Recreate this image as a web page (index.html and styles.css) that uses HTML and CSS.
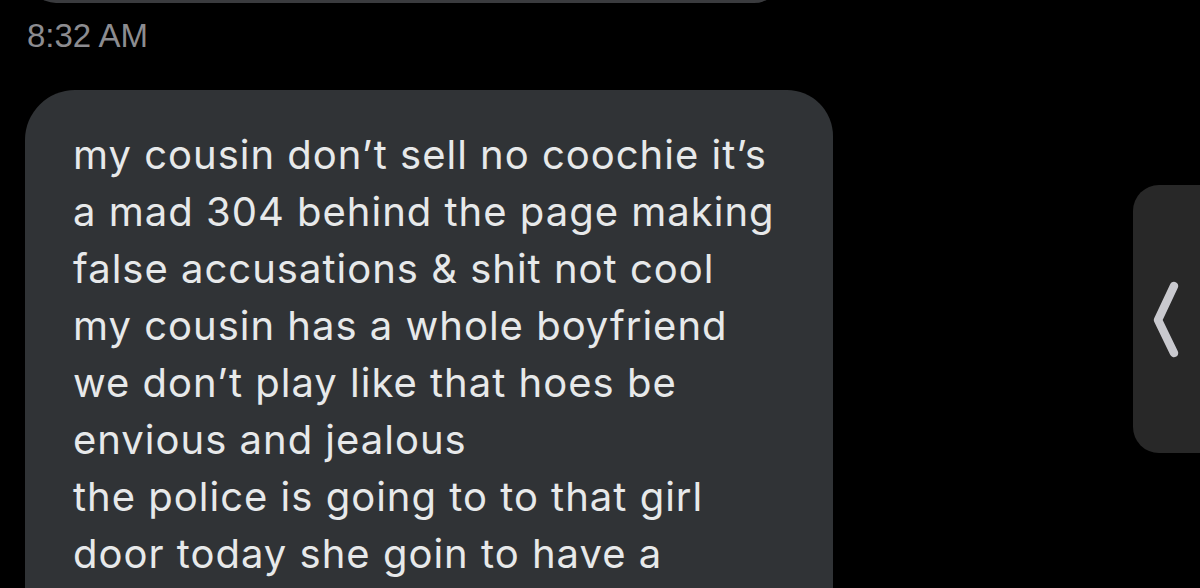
FILE: index.html
```html
<!DOCTYPE html>
<html lang="en">
<head>
<meta charset="utf-8">
<title>Message</title>
<link rel="stylesheet" href="styles.css">
</head>
<body>
<div class="screen">
  <div class="thread">
    <div class="prev-bubble"></div>
    <div class="timestamp">8:32 AM</div>
    <div class="bubble">
      <p class="msg">my cousin don’t sell no coochie it’s<br>a mad 304 behind the page making<br>false accusations &amp; shit not cool<br>my cousin has a whole boyfriend<br>we don’t play like that hoes be<br>envious and jealous<br>the police is going to to that girl<br>door today she goin to have a</p>
    </div>
  </div>
  <div class="side-handle">
    <svg class="chev" width="67" height="268" viewBox="0 0 67 268" aria-hidden="true">
      <path d="M41 101 L25 135 L41 168" fill="none" stroke="#c9c9ce" stroke-width="8.5" stroke-linecap="round" stroke-linejoin="round"/>
    </svg>
  </div>
</div>
</body>
</html>
```

FILE: styles.css
```css
html, body {
  margin: 0;
  padding: 0;
  background: #000;
  height: 100%;
  overflow: hidden;
}

.screen {
  position: relative;
  width: 1200px;
  height: 588px;
  overflow: hidden;
  background: #000;
}

.thread {
  display: flex;
  flex-direction: column;
  align-items: flex-start;
  padding-left: 25px;
}

.prev-bubble {
  width: 754px;
  height: 40px;
  margin-top: -37px;
  margin-left: 3px;
  background: #3a3b3e;
  border-radius: 0 0 28px 28px;
}

.timestamp {
  margin-top: 15px;
  margin-left: 2px;
  font-family: "Liberation Sans", Arial, sans-serif;
  font-size: 33px;
  line-height: 36px;
  color: #8c8c90;
}

.bubble {
  margin-top: 36px;
  width: 808px;
  height: 560px;
  box-sizing: border-box;
  background: #303336;
  border-radius: 50px 46px 0 0;
  padding: 36px 30px 0 48px;
}

.msg {
  margin: 0;
  font-family: Inter, Roboto, "Liberation Sans", sans-serif;
  font-size: 40px;
  line-height: 57px;
  letter-spacing: 1px;
  color: #e7e9ea;
  white-space: nowrap;
}

.side-handle {
  position: absolute;
  left: 1133px;
  top: 185px;
  width: 100px;
  height: 268px;
  background: #282828;
  border-radius: 26px;
  display: flex;
}

.chev {
  display: block;
}
```
